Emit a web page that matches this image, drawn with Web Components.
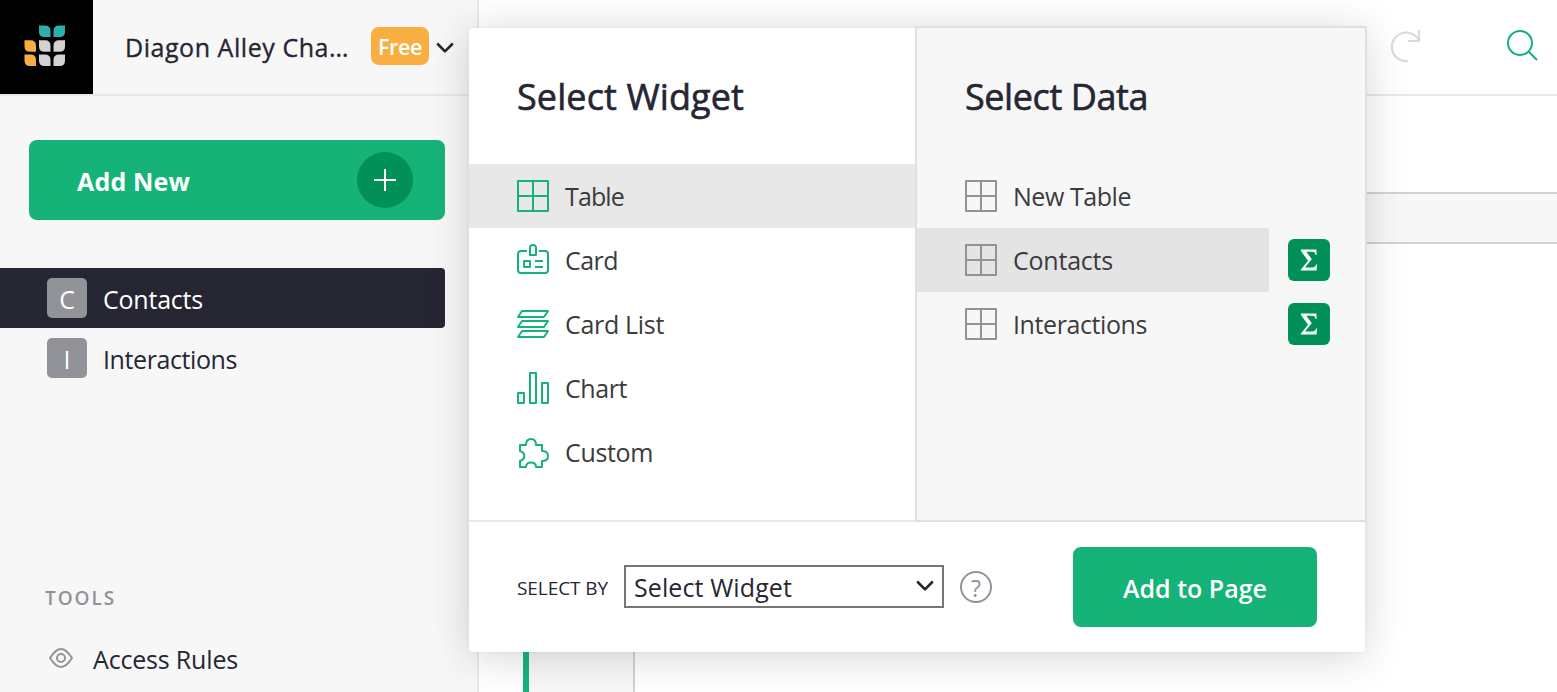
<!DOCTYPE html>
<html lang="en">
<head>
<meta charset="utf-8">
<title>Diagon Alley Charms</title>
<style>
html, body { margin: 0; height: 100%; overflow: hidden; }
body { font-family: "Open Sans", "Noto Sans", sans-serif; font-size: 25px; color: #262633; background: #fff; }
</style>
</head>
<body>
<grist-app></grist-app>
<script>
const define = (name, html, init) => {
  const template = document.createElement('template');
  template.innerHTML = html.trim();
  customElements.define(name, class extends HTMLElement {
    connectedCallback() {
      if (this.shadowRoot) return;
      this.attachShadow({ mode: 'open' }).append(template.content.cloneNode(true));
      if (init) init(this, this.shadowRoot);
    }
  });
};

const icons = {
  table: '<path d="M1 1H31V31H1ZM16 1V31M1 16H31"/>',
  card: '<path d="M10 7H4Q1 7 1 10V26Q1 29 4 29H28Q31 29 31 26V10Q31 7 28 7H22"/><path d="M13 11V4Q13 1 16 1T19 4V11ZM7 17H13V23H7ZM18 17H26M18 23H26"/>',
  list: '<path d="M5 3H31L27 9H1ZM5 13H31L27 19H1ZM5 23H31L27 29H1Z"/>',
  chart: '<path d="M1 21H7V31H1ZM13 1H19V31H13ZM25 11H31V31H25Z"/>',
  custom: '<path transform="translate(0 2)" d="M3 7H9C9 3 11 1 14 1S19 3 19 7H25V13C29 13 31 15 31 18S29 23 25 23V29H19C19 26 17 24.500 14 24.500S9 26 9 29H3V23C6 22 7.3 20.500 7.300 18S6 14 3 13Z"/>',
  chevron: '<path d="M1.200 1.500L9 9.300L16.800 1.500" stroke-width="2.600"/>',
  plus: '<path d="M11 0V22M0 11H22"/>',
  eye: '<path d="M1 10C4.500 4.500 7.500 1 12 1S19.500 4.500 23 10C19.500 15.500 16.500 19 12 19S4.500 15.500 1 10Z"/><circle cx="12" cy="10" r="4"/>',
  redo: '<path d="M17 31A14.300 14.300 0 1 1 28 10.600M28 0V11H17"/>',
  search: '<circle cx="13" cy="13" r="12"/><path d="M21.500 21.500L30 30"/>',
};

define('ui-icon', `
<style>:host{display:block;flex:none;line-height:0}svg{display:block;fill:none;stroke:currentColor;stroke-width:2;stroke-linejoin:round;overflow:visible}</style>
<svg></svg>`, (el, root) => {
  const svg = root.querySelector('svg');
  const [w, h] = (el.getAttribute('box') || '32 32').split(' ');
  svg.setAttribute('width', w);
  svg.setAttribute('height', h);
  svg.innerHTML = icons[el.getAttribute('name')];
});

/* A one-line label whose tracking is adjusted so that it fills the given width. */
define('ui-label', `
<style>:host{display:block;flex:none;white-space:nowrap}span{display:inline-block}</style><span><slot></slot></span>`, (el, root) => {
  const span = root.querySelector('span');
  const width = +el.getAttribute('width');
  span.style.letterSpacing = (width - span.getBoundingClientRect().width) / el.textContent.length + 'px';
  el.style.width = width + 'px';
});

define('grist-logo', `
<style>:host{display:grid;place-items:center;flex:none;width:93px;height:94px;background:#000}svg{display:block;margin:-2px 4px 0 0}</style>
<svg width="42" height="42">
<g fill="#2cb0af"><path d="M15 0.500h6q5.500 0 5.500 5.500v6h-6q-5.500 0-5.500-5.500z"/><path d="M41 .5h-6q-5.500 0-5.500 5.500v6h6q5.500 0 5.500-5.500z"/></g>
<g fill="#f9ae41"><path d="M.5 15.300h6q5.500 0 5.500 5.500v6h-6q-5.500 0-5.500-5.500z"/><path d="M.5 29.500h6q5.500 0 5.500 5.500v6h-6q-5.500 0-5.500-5.500z"/></g>
<g fill="#d2d2d2"><path d="M15 15.300h6q5.500 0 5.500 5.500v6h-6q-5.500 0-5.500-5.500z"/><path d="M41 15.300h-6q-5.500 0-5.500 5.500v6h6q5.500 0 5.500-5.500z"/><path d="M15 29.500h6q5.500 0 5.500 5.500v6h-6q-5.500 0-5.500-5.500z"/><path d="M41 29.500h-6q-5.500 0-5.500 5.500v6h6q5.500 0 5.500-5.500z"/></g>
</svg>`);

define('page-item', `
<style>
:host{display:flex;align-items:center;height:60px;padding-left:47px;border-radius:0 4px 4px 0;line-height:60px}
:host([selected]){background:#262633;color:#fff}
b{width:40px;height:40px;margin-right:16px;border-radius:5px;background:#929299;color:#fff;font-weight:400;text-align:center;line-height:43px}
.t{padding-top:1px}
</style><b></b><div class="t"><slot></slot></div>`, (el, root) => {
  root.querySelector('b').textContent = el.getAttribute('initial');
});

define('side-bar', `
<style>
:host{display:block;width:477px;flex:none;height:692px;background:#f7f7f7;border-right:2px solid #e8e8e8;overflow:hidden}
header{display:flex;align-items:center;height:94px;border-bottom:2px solid #e8e8e8}
.name{margin-left:32px;color:#262633;margin-top:-1px;-webkit-text-stroke:.35px currentColor}
.free{margin-left:22px;margin-right:7px;width:58px;height:38px;margin-top:-2px;border-radius:8px;background:#f9ae41;color:#fff;font-size:21.500px;font-weight:600;line-height:39px;display:flex;justify-content:center}
.new{display:flex;align-items:center;justify-content:space-between;width:336px;height:80px;margin:44px 0 48px 29px;padding:0 32px 0 48px;border-radius:8px;background:#16b378;color:#fff;font-weight:700}
.plus{display:grid;place-items:center;width:56px;height:56px;border-radius:50%;background:#009058}
.pages{width:445px}
h4{margin:190px 0 0 45px;font-size:19px;line-height:40px;font-weight:600;color:#929299}
.tool{display:flex;align-items:center;height:48px;margin:18px 0 0 49px;color:#262633}
.tool ui-icon{color:#929299;margin-right:20px;margin-top:-4px}
.tool ui-label{margin-top:-3px}
</style>
<header><grist-logo></grist-logo><ui-label class="name" width="224">Diagon Alley Cha…</ui-label>
<div class="free"><ui-label width="44">Free</ui-label></div><ui-icon name="chevron" box="18 11"></ui-icon></header>
<div class="new"><ui-label width="113" style="padding-top:2px">Add New</ui-label><div class="plus"><ui-icon name="plus" box="22 22"></ui-icon></div></div>
<div class="pages">
<page-item selected initial="C"><ui-label width="100">Contacts</ui-label></page-item>
<page-item initial="I"><ui-label width="134">Interactions</ui-label></page-item>
</div>
<h4><ui-label width="71">TOOLS</ui-label></h4>
<div class="tool"><ui-icon name="eye" box="24 20"></ui-icon><ui-label width="145">Access Rules</ui-label></div>`);

define('main-view', `
<style>
:host{display:flex;flex-direction:column;flex:1;height:692px;background:#fff}
header{display:flex;justify-content:flex-end;align-items:center;height:94px;border-bottom:2px solid #e8e8e8;gap:87px;padding-right:19px}
.redo{color:#d9d9d9;margin-top:-2px}.search{color:#16b378;margin-top:-4px}
.strip{height:48px;margin-top:96px;background:#f7f7f7;border:solid #d2d2d2;border-width:2px 0}
.grid{flex:1;display:flex;padding-left:44px}
.grid div{width:104px;border-left:6px solid #16b378;border-right:2px solid #d2d2d2;background:#f7f7f7}
</style>
<header><ui-icon class="redo" name="redo" box="29 32"></ui-icon><ui-icon class="search" name="search" box="31 31"></ui-icon></header>
<div class="strip"></div><div class="grid"><div></div></div>`);

define('picker-row', `
<style>
:host{display:flex;height:64px}
.row{display:flex;align-items:center;flex:1;padding-left:48px;gap:16px;color:#3b3b3d}
:host([selected]) .row{background:var(--selected,#e8e8e8)}
.row ui-icon{color:var(--icon,#16b378)}
.label{margin-top:-1px}
.end{display:flex;align-items:center}
</style><div class="row"><ui-icon></ui-icon><div class="label"><slot></slot></div></div><div class="end"><slot name="end"></slot></div>`, (el, root) => {
  const fresh = document.createElement('ui-icon');
  fresh.setAttribute('name', el.getAttribute('icon'));
  root.querySelector('ui-icon').replaceWith(fresh);
});

define('sum-button', `
<style>:host{display:grid;place-items:center;width:42px;height:42px;margin:0 35px 0 19px;border-radius:6px;background:#009058}svg{display:block}</style>
<svg width="18" height="22" fill="#fff"><path d="M1 .5H16.500V6H15.600Q15 2.700 12.500 2.700H6.200L11.800 10.200L4.900 18.500H12.500Q15.600 18.500 16 15.500H17L16.600 21.500H1V20.400L8 11.700L1 2Z"/></svg>`);

define('picker-pane', `
<style>
:host{display:block;box-sizing:border-box}
.title{height:136px;box-sizing:border-box;padding:47px 0 0 48px;font-size:36px;line-height:44px;color:#262633;-webkit-text-stroke:.6px currentColor}
</style><div class="title"><slot name="title"></slot></div><slot></slot>`);

define('by-select', `
<style>:host{display:flex;align-items:center;justify-content:space-between;box-sizing:border-box;width:320px;height:43px;border:2px solid #767676;padding:0 8px;background:#fff;margin:-1px 16px 0;line-height:43px}
div{padding-top:2px}ui-icon{margin-top:-2px}</style>
<div><slot></slot></div><ui-icon name="chevron" box="18 11"></ui-icon>`);

define('widget-picker', `
<style>
:host{display:block;position:absolute;left:469px;top:28px;width:896px;height:624px;border-radius:4px;background:#fff;box-shadow:0 4px 40px rgba(38,38,51,.2),0 0 4px rgba(38,38,51,.04)}
.body{display:flex;height:492px;border-bottom:2px solid #e8e8e8}
.widgets{width:446px;flex:none}
.data{width:452px;height:496px;margin:-2px -2px 0 0;flex:none;border:2px solid #e0e0e0;background:#f7f7f7;--icon:#929299;--selected:#e4e4e4}
footer{display:flex;align-items:center;height:130px;padding:0 48px}
.q{display:grid;place-items:center;box-sizing:border-box;width:32px;height:32px;border:2px solid #929299;border-radius:50%;font-size:23px;line-height:30px;color:#929299}
.add{display:flex;align-items:center;justify-content:center;width:244px;height:80px;margin-left:auto;border-radius:8px;background:#16b378;color:#fff;font-weight:600;line-height:82px}
</style>
<div class="body">
<picker-pane class="widgets"><ui-label slot="title" width="227">Select Widget</ui-label>
<picker-row icon="table" selected><ui-label width="59">Table</ui-label></picker-row>
<picker-row icon="card"><ui-label width="53">Card</ui-label></picker-row>
<picker-row icon="list"><ui-label width="99">Card List</ui-label></picker-row>
<picker-row icon="chart"><ui-label width="62">Chart</ui-label></picker-row>
<picker-row icon="custom"><ui-label width="88">Custom</ui-label></picker-row>
</picker-pane>
<picker-pane class="data"><ui-label slot="title" width="183">Select Data</ui-label>
<picker-row icon="table"><ui-label width="118">New Table</ui-label></picker-row>
<picker-row icon="table" selected><ui-label width="100">Contacts</ui-label><sum-button slot="end"></sum-button></picker-row>
<picker-row icon="table"><ui-label width="134">Interactions</ui-label><sum-button slot="end"></sum-button></picker-row>
</picker-pane>
</div>
<footer><ui-label width="91" style="font-size:19px;padding-top:2px">SELECT BY</ui-label><by-select><ui-label width="158">Select Widget</ui-label></by-select><div class="q">?</div><div class="add"><ui-label width="144" style="padding-top:1px">Add to Page</ui-label></div></footer>`);

define('grist-app', `
<style>:host{display:flex;position:relative;width:1557px;height:692px;overflow:hidden}</style>
<side-bar></side-bar><main-view></main-view><widget-picker></widget-picker>`);
</script>
</body>
</html>
